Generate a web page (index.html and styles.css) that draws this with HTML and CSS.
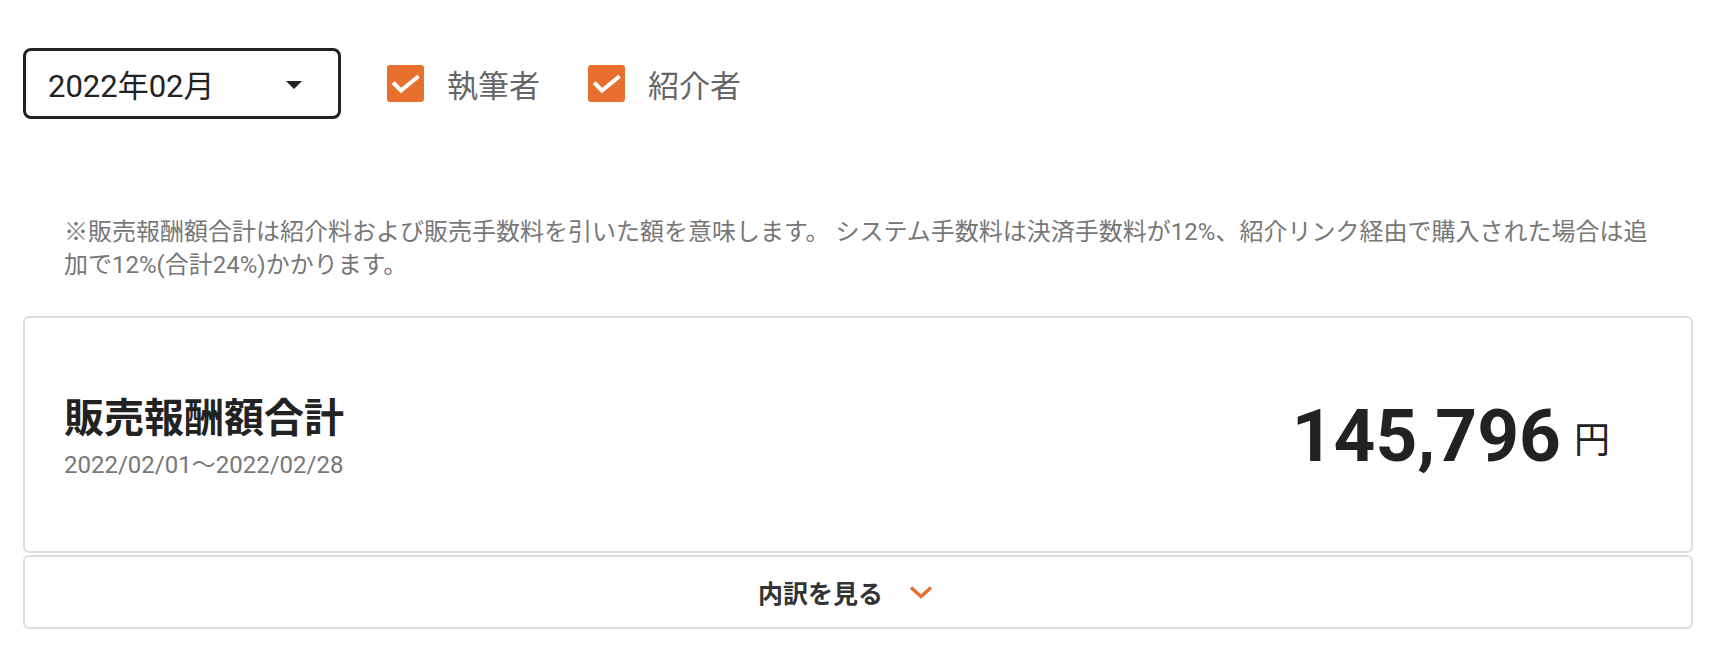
FILE: index.html
```html
<!DOCTYPE html>
<html lang="ja">
<head>
    <meta charset="UTF-8">
    <meta name="viewport" content="width=device-width, initial-scale=1.0">
    <title>販売報酬額合計</title>
    <link rel="stylesheet" href="styles.css">
</head>
<body>
    <div class="page">
        <div class="controls">
            <div class="select">
                <span>2022年02月</span>
                <span class="caret"></span>
            </div>
            <label class="check">
                <span class="box">
                    <svg width="37" height="37" viewBox="0 0 37 37"><polyline points="7.5,19 14,25.5 30,12.5" fill="none" stroke="#fff" stroke-width="4" stroke-linecap="square"/></svg>
                </span>
                <span class="check-label">執筆者</span>
            </label>
            <label class="check">
                <span class="box">
                    <svg width="37" height="37" viewBox="0 0 37 37"><polyline points="7.5,19 14,25.5 30,12.5" fill="none" stroke="#fff" stroke-width="4" stroke-linecap="square"/></svg>
                </span>
                <span class="check-label">紹介者</span>
            </label>
        </div>

        <p class="note">※販売報酬額合計は紹介料および販売手数料を引いた額を意味します。 システム手数料は決済手数料が12%、紹介リンク経由で購入された場合は追加で12%(合計24%)かかります。</p>

        <div class="card">
            <div class="card-left">
                <div class="card-title">販売報酬額合計</div>
                <div class="card-date">2022/02/01〜2022/02/28</div>
            </div>
            <div class="amount">
                <span class="amount-num">145,796</span>
                <span class="amount-unit">円</span>
            </div>
        </div>
        <div class="toggle">
            <span class="toggle-text">内訳を見る</span>
            <svg class="chevron" width="24" height="14" viewBox="0 0 24 14"><polyline points="2,2.5 12,11.5 22,2.5" fill="none" stroke="#E8702F" stroke-width="3.5"/></svg>
        </div>
    </div>
</body>
</html>
```

FILE: styles.css
```css
body {
    margin: 0;
    font-family: Roboto, "Noto Sans CJK JP", sans-serif;
    color: #222;
    background: #fff;
}
.page {
    padding: 48px 37px 0 23px;
}
.controls {
    display: flex;
    align-items: center;
}
.select {
    width: 318px;
    height: 71px;
    box-sizing: border-box;
    border: 3px solid #222;
    border-radius: 8px;
    display: flex;
    align-items: center;
    justify-content: space-between;
    padding: 0 36px 0 22px;
    font-size: 31px;
    color: #222;
}
.caret {
    width: 0;
    height: 0;
    border-left: 8.5px solid transparent;
    border-right: 8.5px solid transparent;
    border-top: 8px solid #222;
    margin-top: 2px;
}
.check {
    display: flex;
    align-items: center;
    gap: 23px;
    margin-left: 46px;
}
.check + .check {
    margin-left: 48px;
}
.box {
    width: 37px;
    height: 37px;
    background: #E8702F;
    border-radius: 3px;
    display: block;
}
.box svg {
    display: block;
}
.check-label {
    font-size: 31px;
    color: #666;
}
.note {
    margin: 97px 0 0;
    padding: 0 30px 0 41px;
    font-size: 24px;
    line-height: 33px;
    color: #777;
}
.card {
    margin-top: 34px;
    height: 237px;
    box-sizing: border-box;
    border: 2px solid #ddd;
    border-radius: 6px;
    display: flex;
    align-items: center;
    justify-content: space-between;
    padding: 4px 81px 0 39px;
}
.card-title {
    font-size: 40px;
    font-weight: 700;
    line-height: 52px;
    color: #222;
}
.card-date {
    margin-top: 4px;
    font-size: 24px;
    line-height: 32px;
    color: #777;
}
.amount {
    display: flex;
    align-items: center;
}
.amount-num {
    font-size: 73px;
    font-weight: 700;
    line-height: 1;
    color: #222;
}
.amount-unit {
    font-size: 36px;
    margin-left: 13px;
    color: #222;
}
.toggle {
    margin-top: 2px;
    height: 74px;
    box-sizing: border-box;
    border: 2px solid #ddd;
    border-radius: 6px;
    display: flex;
    align-items: center;
    justify-content: center;
    padding-right: 25px;
}
.toggle-text {
    font-size: 25px;
    font-weight: 700;
    color: #333;
}
.chevron {
    margin-left: 26px;
}
```
